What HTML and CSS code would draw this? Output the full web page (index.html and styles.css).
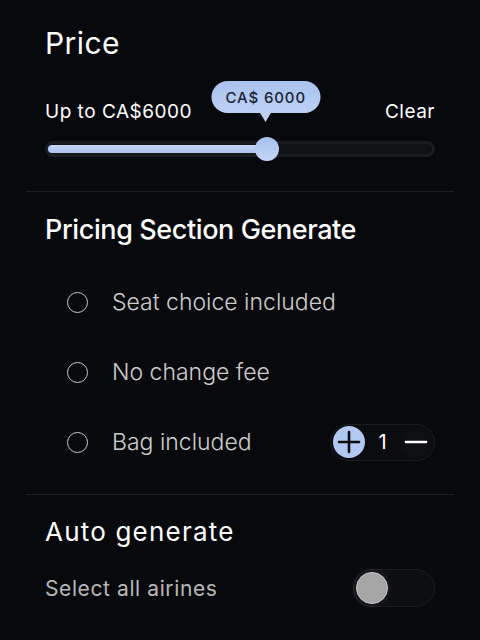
FILE: index.html
```html
<!DOCTYPE html>
<html>
<head>
<meta charset="utf-8">
<link rel="stylesheet" href="styles.css">
</head>
<body>
<div class="panel">
  <section class="section price">
    <h1 class="title price-title">Price</h1>
    <div class="range-row">
      <span class="range-label">Up to CA$6000</span>
      <span class="clear">Clear</span>
    </div>
    <div class="slider">
      <div class="track">
        <div class="fill" style="width: 56.4%"></div>
      </div>
      <div class="thumb" style="left: 56.8%"></div>
      <div class="tooltip" style="left: 56.6%">CA$ 6000</div>
    </div>
  </section>
  <section class="section pricing">
    <h2 class="title tight">Pricing Section Generate</h2>
    <ul class="options">
      <li class="option"><span class="radio"></span><span class="opt-label">Seat choice included</span></li>
      <li class="option"><span class="radio"></span><span class="opt-label">No change fee</span></li>
      <li class="option"><span class="radio"></span><span class="opt-label">Bag included</span>
        <div class="stepper">
          <span class="step plus"><svg viewBox="0 0 32 32" width="32" height="32"><path d="M6 16h20M16 6v20" stroke="#0b0c10" stroke-width="2.6" stroke-linecap="round"/></svg></span>
          <span class="count">1</span>
          <span class="step minus"><svg viewBox="0 0 32 32" width="32" height="32"><path d="M6 16h20" stroke="#ffffff" stroke-width="2.6" stroke-linecap="round"/></svg></span>
        </div>
      </li>
    </ul>
  </section>
  <section class="section auto">
    <h2 class="title auto-title">Auto generate</h2>
    <div class="toggle-row">
      <span class="toggle-label">Select all airines</span>
      <span class="toggle"><span class="knob"></span></span>
    </div>
  </section>
</div>
</body>
</html>
```

FILE: styles.css
```css
* { box-sizing: border-box; }
html, body {
  margin: 0;
  padding: 0;
  background: #08090c;
}
body {
  font-family: Inter, "Noto Sans", sans-serif;
  color: #ffffff;
  width: 480px;
  height: 640px;
  overflow: hidden;
}
.panel {
  padding: 0 26px;
}
.section {
  padding: 0 19px;
  border-top: 1px solid #1d1f24;
}
.section.price {
  border-top: none;
  padding-top: 26px;
  padding-bottom: 34px;
}
.title {
  margin: 0;
  font-weight: 400;
  font-size: 29px;
  line-height: 34px;
  letter-spacing: 0.2px;
}
.price-title {
  font-size: 30px;
  letter-spacing: 0.4px;
}
.range-row {
  display: flex;
  justify-content: space-between;
  align-items: baseline;
  margin-top: 40px;
  font-size: 19px;
  line-height: 24px;
  font-weight: 400;
  letter-spacing: 0.5px;
}
.slider {
  position: relative;
  margin-top: 17px;
  height: 16px;
}
.track {
  height: 16px;
  border-radius: 8px;
  background: #111216;
  border: 3px solid #1a1c21;
  padding: 1px 0;
}
.fill {
  height: 8px;
  border-radius: 4px;
  background: linear-gradient(#c4d6f6, #a9c2ee);
}
.thumb {
  position: absolute;
  top: -4px;
  width: 24px;
  height: 24px;
  margin-left: -12px;
  border-radius: 50%;
  background: linear-gradient(#a8c1ec, #c2d5f6);
}
.tooltip {
  position: absolute;
  bottom: 44px;
  transform: translateX(-50%);
  width: 109px;
  height: 32px;
  border-radius: 16px;
  background: linear-gradient(#a9c2ee, #bdd1f5);
  color: #1c2130;
  font-size: 15px;
  font-weight: 500;
  letter-spacing: 0.9px;
  display: flex;
  align-items: center;
  justify-content: center;
}
.tooltip::after {
  content: "";
  position: absolute;
  left: 50%;
  top: 31px;
  margin-left: -6px;
  border-left: 6px solid transparent;
  border-right: 6px solid transparent;
  border-top: 10px solid #bdd1f5;
}
.section.pricing {
  padding-top: 21px;
  padding-bottom: 32px;
}
.tight {
  font-size: 27px;
  font-weight: 450;
  letter-spacing: -0.4px;
}
.options {
  list-style: none;
  margin: 35px 0 0 0;
  padding: 0;
  display: flex;
  flex-direction: column;
  gap: 30px;
}
.option {
  display: flex;
  align-items: center;
  height: 40px;
  padding-left: 22px;
}
.radio {
  width: 21px;
  height: 21px;
  border-radius: 50%;
  border: 1.5px solid #c9c9c9;
  flex: none;
}
.opt-label {
  margin-left: 24px;
  font-size: 23px;
  font-weight: 300;
  color: #cdcdcd;
  letter-spacing: 0;
  flex: 1;
}
.stepper {
  display: flex;
  align-items: center;
  width: 105px;
  height: 37px;
  border-radius: 19px;
  background: #0b0c10;
  border: 1px solid #1c1e23;
  padding: 0 2px;
}
.step {
  width: 32px;
  height: 32px;
  border-radius: 50%;
  display: flex;
}
.plus {
  background: #b1c8f1;
}
.minus {
  background: #0e0f13;
}
.count {
  flex: 1;
  text-align: center;
  font-size: 20px;
  font-weight: 400;
}
.section.auto {
  padding-top: 20px;
}
.auto-title {
  font-size: 26px;
  letter-spacing: 1.2px;
}
.toggle-row {
  display: flex;
  justify-content: space-between;
  align-items: center;
  margin-top: 20px;
}
.toggle-label {
  font-size: 21px;
  color: #b8b8b8;
  font-weight: 400;
  letter-spacing: 0.6px;
}
.toggle {
  width: 82px;
  height: 38px;
  border-radius: 19px;
  background: #0d0e12;
  border: 1px solid #1c1e23;
  display: flex;
  align-items: center;
  padding: 0 2px;
}
.knob {
  width: 32px;
  height: 32px;
  border-radius: 50%;
  background: #a6a6a6;
  border: 1.5px solid #c9c9c9;
  box-shadow: 0 0 8px rgba(255,255,255,0.12);
}
```
